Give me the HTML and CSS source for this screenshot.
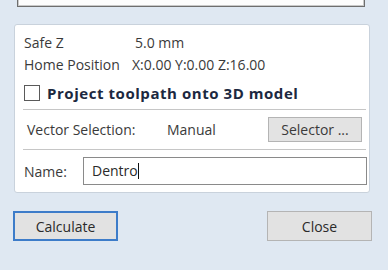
FILE: index.html
```html
<!doctype html>
<html lang="en">

<head>
    <meta charset="UTF-8">
    <title>Toolpath</title>
    <link rel="stylesheet" href="styles.css">
</head>

<body>
    <div class="top_box"></div>

    <div class="panel">
        <div class="row">
            <span class="label">Safe Z</span>
            <span class="value">5.0 mm</span>
        </div>
        <div class="row">
            <span class="label">Home Position</span>
            <span class="value val_home">X:0.00 Y:0.00 Z:16.00</span>
        </div>
        <label class="row check_row">
            <span class="check"></span>
            <span class="check_text">Project toolpath onto 3D model</span>
        </label>
        <div class="sep"></div>
        <div class="row vector_row">
            <span class="vec_label">Vector Selection:</span>
            <span class="vec_value">Manual</span>
            <button type="button" class="btn_selector">Selector ...</button>
        </div>
        <div class="sep"></div>
        <div class="row name_row">
            <span class="name_label">Name:</span>
            <div class="name_input">Dentro<span class="caret"></span></div>
        </div>
    </div>

    <div class="actions">
        <button type="button" class="btn btn_calc">Calculate</button>
        <button type="button" class="btn btn_close">Close</button>
    </div>
</body>

</html>
```

FILE: styles.css
```css
* {
    margin: 0;
    padding: 0;
    box-sizing: border-box;
}

body {
    width: 388px;
    height: 270px;
    overflow: hidden;
    background-color: #dfe8f2;
    font-family: "Open Sans", "Noto Sans", sans-serif;
    font-size: 14px;
    color: #3a3a3a;
}

.top_box {
    width: 348px;
    height: 7px;
    margin-left: 17px;
    background-color: #fdfdfd;
    border: 1px solid #6e6e6e;
    border-top: none;
    box-shadow: inset 0 -1px 0 #c9c9c9, inset 1px 0 0 #c9c9c9, inset -1px 0 0 #c9c9c9;
}

.panel {
    width: 356px;
    height: 169px;
    margin: 17px 0 0 14px;
    padding: 6px 2px 0 9px;
    background-color: #fff;
    border: 1px solid #c9d2dc;
    border-radius: 3px;
}

.row {
    display: flex;
    align-items: center;
    height: 22px;
}

.label {
    width: 108px;
}

.value {
    padding-left: 3px;
}

.val_home {
    padding-left: 0;
}

.check_row {
    margin-top: 7px;
}

.check {
    width: 16px;
    height: 16px;
    border: 1px solid #5a5a5a;
    background-color: #fff;
    margin-right: 7px;
}

.check_text {
    font-size: 15px;
    font-weight: bold;
    letter-spacing: 0.55px;
    color: #1c2840;
}

.sep {
    height: 1px;
    margin-top: 5px;
    margin-right: 1px;
    background-color: #c6c6c6;
    margin-left: -1px;
}

.vector_row {
    height: 25px;
    margin-top: 7px;
}

.vector_row + .sep {
    margin-top: 7px;
}

.vec_label {
    width: 143px;
    padding-left: 3px;
}

.vec_value {
    width: 101px;
}

.btn_selector {
    width: 94px;
    height: 25px;
    font-family: inherit;
    font-size: 14px;
    color: #3a3a3a;
    background-color: #e3e3e3;
    border: 1px solid #b4b4b4;
    margin-left: auto;
    margin-right: 5px;
}

.name_row {
    height: 28px;
    margin-top: 7px;
}

.name_label {
    width: 59px;
}

.name_input {
    flex: 1;
    height: 28px;
    padding-left: 8px;
    line-height: 26px;
    border: 1px solid #8a8a8a;
    color: #2a2a2a;
    display: flex;
    align-items: center;
}

.caret {
    width: 1px;
    height: 16px;
    background-color: #111;
}

.actions {
    display: flex;
    justify-content: space-between;
    margin: 18px 16px 0 13px;
}

.btn {
    width: 105px;
    height: 30px;
    font-family: inherit;
    font-size: 14px;
    color: #2a2a2a;
    background-color: #e2e2e2;
    border: 1px solid #b4b4b4;
}

.btn_calc {
    border: 2px solid #3d7cc9;
}
```
